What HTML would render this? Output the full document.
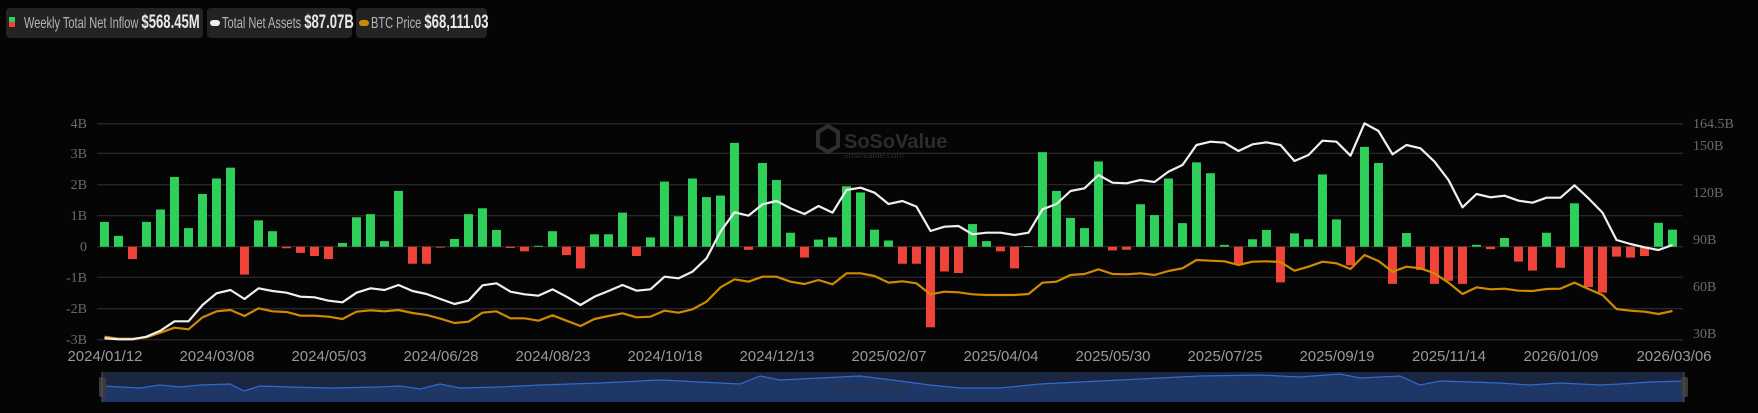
<!DOCTYPE html>
<html><head><meta charset="utf-8"><style>
html,body{margin:0;padding:0;background:#050505;width:1758px;height:413px;overflow:hidden;font-family:"Liberation Sans",sans-serif}
.lg{position:absolute;top:8px;height:30px;background:#232323;border-radius:4px;color:#b5b5b5;font-size:16px;line-height:30px;white-space:nowrap}
.lg b{color:#e8e8e8;font-size:19px}
.t{position:absolute;top:0;transform:scaleX(0.69);transform-origin:0 50%}
</style></head><body>
<div class="lg" style="left:6px;width:197px"><span style="position:absolute;left:3px;top:9px;width:6px;height:5px;background:#2fd05a"></span><span style="position:absolute;left:3px;top:14px;width:6px;height:5px;background:#f0443a"></span><span class="t" style="left:18px">Weekly Total Net Inflow <b>$568.45M</b></span></div>
<div class="lg" style="left:207px;width:145px"><span style="position:absolute;left:3px;top:12px;width:10px;height:6px;background:#eee;border-radius:3px"></span><span class="t" style="left:15px">Total Net Assets <b>$87.07B</b></span></div>
<div class="lg" style="left:356px;width:131px"><span style="position:absolute;left:3px;top:12px;width:10px;height:6px;background:#d08a00;border-radius:3px"></span><span class="t" style="left:15px">BTC Price <b>$68,111.03</b></span></div>
<svg width="1758" height="413" style="position:absolute;left:0;top:0">
<g stroke="#333" stroke-width="1">
<line x1="97" x2="1683" y1="123.7" y2="123.7"/><line x1="97" x2="1683" y1="153.3" y2="153.3"/><line x1="97" x2="1683" y1="184.7" y2="184.7"/><line x1="97" x2="1683" y1="215.7" y2="215.7"/><line x1="97" x2="1683" y1="246.7" y2="246.7"/><line x1="97" x2="1683" y1="277.3" y2="277.3"/><line x1="97" x2="1683" y1="308.7" y2="308.7"/><line x1="97" x2="1683" y1="339.7" y2="339.7"/>
</g>
<g font-family="Liberation Serif,serif" font-size="14" fill="#6a6a6a" text-anchor="end">
<text x="87" y="128">4B</text><text x="87" y="158">3B</text><text x="87" y="189">2B</text><text x="87" y="220">1B</text><text x="87" y="251">0</text><text x="87" y="282">-1B</text><text x="87" y="313">-2B</text><text x="87" y="344">-3B</text>
</g>
<g font-family="Liberation Serif,serif" font-size="14" fill="#6a6a6a">
<text x="1693" y="128">164.5B</text><text x="1693" y="150">150B</text><text x="1693" y="197">120B</text><text x="1693" y="244">90B</text><text x="1693" y="291">60B</text><text x="1693" y="338">30B</text>
</g>
<g font-size="15" fill="#9a9a9a" text-anchor="middle">
<text x="105" y="361">2024/01/12</text><text x="217" y="361">2024/03/08</text><text x="329" y="361">2024/05/03</text><text x="441" y="361">2024/06/28</text><text x="553" y="361">2024/08/23</text><text x="665" y="361">2024/10/18</text><text x="777" y="361">2024/12/13</text><text x="889" y="361">2025/02/07</text><text x="1001" y="361">2025/04/04</text><text x="1113" y="361">2025/05/30</text><text x="1225" y="361">2025/07/25</text><text x="1337" y="361">2025/09/19</text><text x="1449" y="361">2025/11/14</text><text x="1561" y="361">2026/01/09</text><text x="1674" y="361">2026/03/06</text>
</g>
<g fill="#2a2a2a"><path d="M818 132l10-6 10 6v14l-10 6-10-6z" fill="none" stroke="#2e2e2e" stroke-width="4"/>
<text x="844" y="148" font-size="20" font-weight="bold" fill="#2c2c2c">SoSoValue</text><text x="844" y="158" font-size="9" fill="#2a2a2a">sosovalue.com</text></g>
<g transform="translate(100,246.7) scale(14,-31)">
<g fill="#2fd05a">
<rect x="0" y="0" width=".64" height=".8"/><rect x="1" y="0" width=".64" height=".35"/><rect x="3" y="0" width=".64" height=".8"/><rect x="4" y="0" width=".64" height="1.2"/><rect x="5" y="0" width=".64" height="2.25"/><rect x="6" y="0" width=".64" height=".6"/><rect x="7" y="0" width=".64" height="1.7"/><rect x="8" y="0" width=".64" height="2.2"/><rect x="9" y="0" width=".64" height="2.55"/><rect x="11" y="0" width=".64" height=".85"/><rect x="12" y="0" width=".64" height=".5"/><rect x="17" y="0" width=".64" height=".12"/><rect x="18" y="0" width=".64" height=".95"/><rect x="19" y="0" width=".64" height="1.05"/><rect x="20" y="0" width=".64" height=".18"/><rect x="21" y="0" width=".64" height="1.8"/><rect x="25" y="0" width=".64" height=".25"/><rect x="26" y="0" width=".64" height="1.05"/><rect x="27" y="0" width=".64" height="1.24"/><rect x="28" y="0" width=".64" height=".54"/><rect x="31" y="0" width=".64" height=".03"/><rect x="32" y="0" width=".64" height=".5"/><rect x="35" y="0" width=".64" height=".4"/><rect x="36" y="0" width=".64" height=".4"/><rect x="37" y="0" width=".64" height="1.1"/><rect x="39" y="0" width=".64" height=".3"/><rect x="40" y="0" width=".64" height="2.1"/><rect x="41" y="0" width=".64" height=".98"/><rect x="42" y="0" width=".64" height="2.2"/><rect x="43" y="0" width=".64" height="1.6"/><rect x="44" y="0" width=".64" height="1.65"/><rect x="45" y="0" width=".64" height="3.35"/><rect x="47" y="0" width=".64" height="2.7"/><rect x="48" y="0" width=".64" height="2.15"/><rect x="49" y="0" width=".64" height=".45"/><rect x="51" y="0" width=".64" height=".23"/><rect x="52" y="0" width=".64" height=".3"/><rect x="53" y="0" width=".64" height="1.95"/><rect x="54" y="0" width=".64" height="1.75"/><rect x="55" y="0" width=".64" height=".55"/><rect x="56" y="0" width=".64" height=".2"/><rect x="62" y="0" width=".64" height=".73"/><rect x="63" y="0" width=".64" height=".18"/><rect x="66" y="0" width=".64" height=".02"/><rect x="67" y="0" width=".64" height="3.05"/><rect x="68" y="0" width=".64" height="1.8"/><rect x="69" y="0" width=".64" height=".93"/><rect x="70" y="0" width=".64" height=".6"/><rect x="71" y="0" width=".64" height="2.75"/><rect x="74" y="0" width=".64" height="1.37"/><rect x="75" y="0" width=".64" height="1.02"/><rect x="76" y="0" width=".64" height="2.2"/><rect x="77" y="0" width=".64" height=".76"/><rect x="78" y="0" width=".64" height="2.72"/><rect x="79" y="0" width=".64" height="2.37"/><rect x="80" y="0" width=".64" height=".06"/><rect x="82" y="0" width=".64" height=".24"/><rect x="83" y="0" width=".64" height=".54"/><rect x="85" y="0" width=".64" height=".43"/><rect x="86" y="0" width=".64" height=".24"/><rect x="87" y="0" width=".64" height="2.33"/><rect x="88" y="0" width=".64" height=".88"/><rect x="90" y="0" width=".64" height="3.22"/><rect x="91" y="0" width=".64" height="2.7"/><rect x="93" y="0" width=".64" height=".44"/><rect x="98" y="0" width=".64" height=".06"/><rect x="100" y="0" width=".64" height=".28"/><rect x="103" y="0" width=".64" height=".45"/><rect x="105" y="0" width=".64" height="1.4"/><rect x="111" y="0" width=".64" height=".77"/><rect x="112" y="0" width=".64" height=".55"/>
</g>
<g fill="#f0443a">
<rect x="2" y="-.4" width=".64" height=".4"/><rect x="10" y="-.9" width=".64" height=".9"/><rect x="13" y="-.05" width=".64" height=".05"/><rect x="14" y="-.2" width=".64" height=".2"/><rect x="15" y="-.3" width=".64" height=".3"/><rect x="16" y="-.4" width=".64" height=".4"/><rect x="22" y="-.55" width=".64" height=".55"/><rect x="23" y="-.55" width=".64" height=".55"/><rect x="24" y="-.03" width=".64" height=".03"/><rect x="29" y="-.04" width=".64" height=".04"/><rect x="30" y="-.15" width=".64" height=".15"/><rect x="33" y="-.27" width=".64" height=".27"/><rect x="34" y="-.7" width=".64" height=".7"/><rect x="38" y="-.3" width=".64" height=".3"/><rect x="46" y="-.1" width=".64" height=".1"/><rect x="50" y="-.35" width=".64" height=".35"/><rect x="57" y="-.55" width=".64" height=".55"/><rect x="58" y="-.55" width=".64" height=".55"/><rect x="59" y="-2.6" width=".64" height="2.6"/><rect x="60" y="-.8" width=".64" height=".8"/><rect x="61" y="-.85" width=".64" height=".85"/><rect x="64" y="-.15" width=".64" height=".15"/><rect x="65" y="-.7" width=".64" height=".7"/><rect x="72" y="-.12" width=".64" height=".12"/><rect x="73" y="-.1" width=".64" height=".1"/><rect x="81" y="-.55" width=".64" height=".55"/><rect x="84" y="-1.15" width=".64" height="1.15"/><rect x="89" y="-.6" width=".64" height=".6"/><rect x="92" y="-1.2" width=".64" height="1.2"/><rect x="94" y="-.75" width=".64" height=".75"/><rect x="95" y="-1.2" width=".64" height="1.2"/><rect x="96" y="-1.1" width=".64" height="1.1"/><rect x="97" y="-1.2" width=".64" height="1.2"/><rect x="99" y="-.08" width=".64" height=".08"/><rect x="101" y="-.48" width=".64" height=".48"/><rect x="102" y="-.77" width=".64" height=".77"/><rect x="104" y="-.68" width=".64" height=".68"/><rect x="106" y="-1.3" width=".64" height="1.3"/><rect x="107" y="-1.48" width=".64" height="1.48"/><rect x="108" y="-.32" width=".64" height=".32"/><rect x="109" y="-.35" width=".64" height=".35"/><rect x="110" y="-.3" width=".64" height=".3"/>
</g>
</g>
<g transform="translate(104.5,100) scale(14,0.33333)" fill="none" stroke-width="2.2" stroke-linejoin="round">
<polyline vector-effect="non-scaling-stroke" stroke="#d08a00" points="0,710 1,716 2,716 3,712 4,698 5,683 6,688 7,652 8,634 9,630 10,648 11,625 12,634 13,636 14,647 15,647 16,650 17,657 18,635 19,631 20,634 21,630 22,639 23,645 24,656 25,669 26,665 27,638 28,634 29,655 30,655 31,662 32,646 33,662 34,678 35,657 36,648 37,640 38,652 39,650 40,632 41,638 42,628 43,605 44,562 45,538 46,545 47,530 48,530 49,545 50,552 51,540 52,553 53,520 54,520 55,528 56,548 57,544 58,550 59,583 60,575 61,577 62,583 63,585 64,585 65,585 66,582 67,548 68,545 69,525 70,522 71,508 72,522 73,523 74,520 75,525 76,513 77,505 78,480 79,482 80,484 81,495 82,485 83,484 84,486 85,512 86,500 87,485 88,490 89,507 90,465 91,483 92,515 93,500 94,505 95,520 96,548 97,582 98,562 99,568 100,566 101,572 102,573 103,567 104,566 105,548 106,567 107,585 108,627 109,632 110,635 111,642 112,633"/>
<polyline vector-effect="non-scaling-stroke" stroke="#f0f0f0" points="0,715 1,718 2,718 3,710 4,692 5,664 6,664 7,615 8,580 9,570 10,597 11,565 12,573 13,578 14,590 15,592 16,602 17,607 18,578 19,565 20,570 21,555 22,573 23,582 24,597 25,612 26,602 27,556 28,550 29,575 30,583 31,587 32,568 33,590 34,615 35,590 36,573 37,555 38,572 39,568 40,530 41,535 42,515 43,475 44,395 45,337 46,347 47,313 48,303 49,325 50,342 51,318 52,338 53,270 54,263 55,278 56,312 57,303 58,320 59,393 60,380 61,378 62,403 63,398 64,398 65,405 66,398 67,328 68,312 69,273 70,265 71,225 72,248 73,250 74,240 75,246 76,215 77,195 78,135 79,125 80,128 81,153 82,133 83,127 84,135 85,183 86,165 87,122 88,125 89,167 90,70 91,93 92,163 93,135 94,145 95,185 96,240 97,322 98,282 99,292 100,287 101,302 102,308 103,293 104,293 105,256 106,295 107,338 108,420 109,432 110,442 111,450 112,435"/>
</g>
<rect x="102" y="372" width="1582" height="30" fill="#1b2640"/>
<polygon fill="#1e3766" points="102,386 140,388 160,385 180,387 200,385 230,384 244,391 260,386 290,387 330,388 380,387 400,386 420,389 440,384 460,388 500,387 540,385 600,383 660,380 700,382 740,384 760,376 780,380 820,378 860,376 900,381 930,385 960,388 1000,388 1040,384 1080,382 1120,380 1160,378 1200,376 1260,375 1300,377 1340,374 1360,378 1400,376 1420,385 1440,381 1470,382 1500,383 1530,385 1560,383 1580,384 1600,385 1620,384 1650,382 1684,381 1684,402 102,402"/>
<polyline fill="none" stroke="#2f6ad0" stroke-width="1.2" points="102,386 140,388 160,385 180,387 200,385 230,384 244,391 260,386 290,387 330,388 380,387 400,386 420,389 440,384 460,388 500,387 540,385 600,383 660,380 700,382 740,384 760,376 780,380 820,378 860,376 900,381 930,385 960,388 1000,388 1040,384 1080,382 1120,380 1160,378 1200,376 1260,375 1300,377 1340,374 1360,378 1400,376 1420,385 1440,381 1470,382 1500,383 1530,385 1560,383 1580,384 1600,385 1620,384 1650,382 1684,381"/>
<text x="835" y="393" font-size="14" font-weight="bold" fill="#2a3550">SoSoValue</text>
<rect x="99" y="377" width="7" height="20" rx="2" fill="#3a3a3a"/><line x1="102" x2="102" y1="372" y2="402" stroke="#555"/>
<rect x="1681" y="377" width="7" height="20" rx="2" fill="#3a3a3a"/><line x1="1684" x2="1684" y1="372" y2="402" stroke="#555"/>
</svg>
</body></html>
